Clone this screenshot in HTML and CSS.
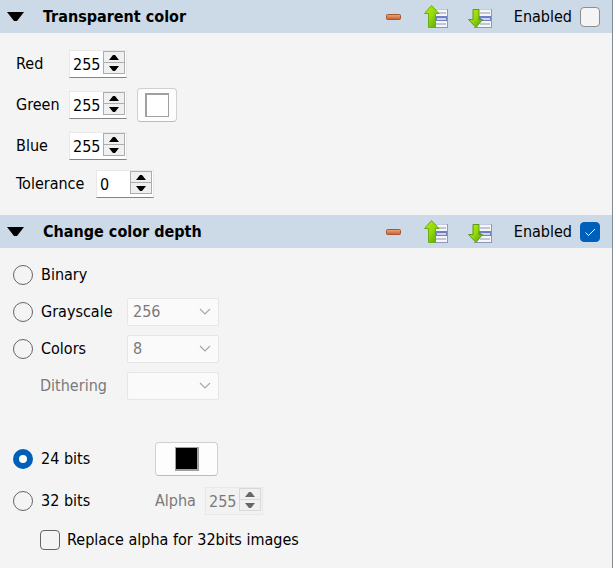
FILE: index.html
```html
<!DOCTYPE html>
<html lang="en">
<head>
<meta charset="utf-8">
<title>Image actions</title>
<link rel="stylesheet" href="styles.css">
</head>
<body>
<svg class="defs" aria-hidden="true">
  <defs>
    <linearGradient id="green" x1="0" y1="0" x2="1" y2="1">
      <stop offset="0" stop-color="#b8f000"/><stop offset="0.5" stop-color="#94d808"/><stop offset="1" stop-color="#4f9a12"/>
    </linearGradient>
    <linearGradient id="orange" x1="0" y1="0" x2="0" y2="1">
      <stop offset="0" stop-color="#f0a878"/><stop offset="1" stop-color="#c4602c"/>
    </linearGradient>
    <symbol id="list" viewBox="0 0 24 24">
      <rect x="6" y="4" width="18" height="19" fill="#f4f6fc"/>
      <path d="M6 4.500H24" stroke="#c4c8e0"/>
      <rect x="6" y="11" width="18" height="5" fill="#7080bc"/>
      <path d="M12 8H22M12 19H22" stroke="#c4c6ce" stroke-width="2"/>
      <path d="M13 14H22" stroke="#c8d4f4" stroke-width="2"/>
      <path d="M23.500 4V23M6 22.500H24" stroke="#9092c0" fill="none"/>
    </symbol>
    <symbol id="up" viewBox="0 0 24 24">
      <use href="#list" width="24" height="24"/>
      <path d="M7.500 .5L15 8.500H11.500V22.500H4.500V8.500H.5Z" fill="url(#green)" stroke="#69ad18"/>
    </symbol>
    <symbol id="down" viewBox="0 0 24 24">
      <use href="#list" width="24" height="24"/>
      <path d="M5 4.500H11V14.500H14.500L8 22.500L.5 14.500H5Z" fill="url(#green)" stroke="#5b9a1c"/>
    </symbol>
    <symbol id="minus" viewBox="0 0 16 6">
      <rect x=".5" y=".5" width="14" height="5" rx="1" fill="url(#orange)" stroke="#a5572f"/>
    </symbol>
    <symbol id="chevron" viewBox="0 0 12 8">
      <path d="M1 1L6 6L11 1" fill="none" stroke="currentColor" stroke-width="1.2"/>
    </symbol>
    <symbol id="tri-up" viewBox="0 0 10 5"><path d="M0 5L4 0H6L10 5Z" fill="currentColor"/></symbol>
    <symbol id="tri-down" viewBox="0 0 10 5"><path d="M0 0L4 5H6L10 0Z" fill="currentColor"/></symbol>
  </defs>
</svg>
<main class="panel">
  <section>
    <header class="bar">
      <button class="plain fold" aria-label="Collapse"><svg width="18" height="9" viewBox="0 0 18 9"><path d="M0 0H17L10 9H7Z"/></svg></button>
      <h2 class="title">Transparent color</h2>
      <div class="tools">
        <button class="plain" aria-label="Remove"><svg width="16" height="6"><use href="#minus"/></svg></button>
        <button class="plain" aria-label="Move up"><svg width="24" height="24"><use href="#up"/></svg></button>
        <button class="plain" aria-label="Move down"><svg width="24" height="24"><use href="#down"/></svg></button>
      </div>
      <label class="enabled">Enabled <input class="check light" type="checkbox"></label>
    </header>
    <div class="body channels">
      <div class="row">
        <label class="name" for="red">Red</label>
        <div class="spin"><input id="red" type="text" value="255"><div class="steps"><button aria-label="Increase red"><svg width="10" height="5"><use href="#tri-up"/></svg></button><button aria-label="Decrease red"><svg width="10" height="5"><use href="#tri-down"/></svg></button></div></div>
      </div>
      <div class="row">
        <label class="name" for="green-value">Green</label>
        <div class="spin"><input id="green-value" type="text" value="255"><div class="steps"><button aria-label="Increase green"><svg width="10" height="5"><use href="#tri-up"/></svg></button><button aria-label="Decrease green"><svg width="10" height="5"><use href="#tri-down"/></svg></button></div></div>
        <button class="picker" aria-label="Pick transparent color"><span class="swatch"></span></button>
      </div>
      <div class="row">
        <label class="name" for="blue">Blue</label>
        <div class="spin"><input id="blue" type="text" value="255"><div class="steps"><button aria-label="Increase blue"><svg width="10" height="5"><use href="#tri-up"/></svg></button><button aria-label="Decrease blue"><svg width="10" height="5"><use href="#tri-down"/></svg></button></div></div>
      </div>
      <div class="row">
        <label class="name wide" for="tolerance">Tolerance</label>
        <div class="spin"><input id="tolerance" type="text" value="0"><div class="steps"><button aria-label="Increase tolerance"><svg width="10" height="5"><use href="#tri-up"/></svg></button><button aria-label="Decrease tolerance"><svg width="10" height="5"><use href="#tri-down"/></svg></button></div></div>
      </div>
    </div>
  </section>
  <section>
    <header class="bar">
      <button class="plain fold" aria-label="Collapse"><svg width="18" height="9" viewBox="0 0 18 9"><path d="M0 0H17L10 9H7Z"/></svg></button>
      <h2 class="title">Change color depth</h2>
      <div class="tools">
        <button class="plain" aria-label="Remove"><svg width="16" height="6"><use href="#minus"/></svg></button>
        <button class="plain" aria-label="Move up"><svg width="24" height="24"><use href="#up"/></svg></button>
        <button class="plain" aria-label="Move down"><svg width="24" height="24"><use href="#down"/></svg></button>
      </div>
      <label class="enabled">Enabled <span class="box"><input class="check" type="checkbox" checked><svg class="tick" width="20" height="20" viewBox="0 0 20 20"><path d="M5.500 10.500L8.500 13.500L15 7" fill="none" stroke="#fff"/></svg></span></label>
    </header>
    <div class="body depth">
      <div class="group palette">
        <div class="row"><label class="option"><input type="radio" name="depth">Binary</label></div>
        <div class="row">
          <label class="option"><input type="radio" name="depth">Grayscale</label>
          <div class="combo"><select aria-label="Gray levels" disabled><option>256</option></select><svg width="12" height="8"><use href="#chevron"/></svg></div>
        </div>
        <div class="row">
          <label class="option"><input type="radio" name="depth">Colors</label>
          <div class="combo"><select aria-label="Color count" disabled><option>8</option></select><svg width="12" height="8"><use href="#chevron"/></svg></div>
        </div>
        <div class="row">
          <label class="option dim" for="dither">Dithering</label>
          <div class="combo"><select id="dither" disabled><option></option></select><svg width="12" height="8"><use href="#chevron"/></svg></div>
        </div>
      </div>
      <div class="group bits">
        <div class="row">
          <label class="option long"><input type="radio" name="depth" checked>24 bits</label>
          <button class="picker broad" aria-label="Pick background color"><span class="swatch black"></span></button>
        </div>
        <div class="row">
          <label class="option long"><input type="radio" name="depth">32 bits</label>
          <label class="alpha" for="alpha">Alpha</label>
          <div class="spin off"><input id="alpha" type="text" value="255" disabled><div class="steps"><button disabled aria-label="Increase alpha"><svg width="10" height="5"><use href="#tri-up"/></svg></button><button disabled aria-label="Decrease alpha"><svg width="10" height="5"><use href="#tri-down"/></svg></button></div></div>
        </div>
        <div class="row"><label class="replace"><input class="check" type="checkbox">Replace alpha for 32bits images</label></div>
      </div>
    </div>
  </section>
</main>
</body>
</html>
```
FILE: styles.css
```css
* { box-sizing: border-box; }
body {
  margin: 0;
  background: #f4f4f4;
  color: #000;
  font: 16px/20px "DejaVu Sans Condensed", "Noto Sans", sans-serif;
}
button, input, select { font: inherit; color: inherit; margin: 0; }
svg { display: block; }
.defs { position: absolute; width: 0; height: 0; }
.panel { min-height: 100vh; border-right: 1px solid #858b93; }

.bar {
  display: flex;
  align-items: center;
  height: 33px;
  padding: 0 12px 0 7px;
  background: #ccd9e6;
}
.plain { border: 0; padding: 0; background: none; }
.fold { width: 36px; }
.title { flex: 1; margin: 0; font-size: 16px; font-weight: 700; }
.tools { display: flex; align-items: center; gap: 20px; margin-right: 22px; }
.tools button:first-child { margin-right: 2px; }
.enabled { display: flex; align-items: center; gap: 8px; }

.check {
  appearance: none;
  display: block;
  width: 20px;
  height: 20px;
  border: 1px solid #666;
  border-radius: 4px;
  background: #f4f4f4;
}
.check.light { border-color: #8a8d91; }
.check:checked { border-color: #005fb8; background: #005fb8; }
.box { position: relative; }
.tick { position: absolute; inset: 0; pointer-events: none; }

.body, .group { display: flex; flex-direction: column; }
.channels { gap: 10px; padding: 17px 16px; }
.depth { gap: 42px; padding: 13px 13px 12px; }
.palette { gap: 9px; }
.bits { gap: 11px; }
.row { display: flex; align-items: center; min-height: 28px; }
.name { width: 53px; }
.name.wide { width: 80px; }

.spin {
  display: flex;
  width: 58px;
  height: 28px;
  padding: 0 1px 0 0;
  border: 1px solid #e8e8e8;
  border-bottom-color: #848484;
  background: #fff;
}
.spin input {
  flex: 1;
  min-width: 0;
  padding: 2px 0 0 3px;
  border: 0;
  background: none;
  outline: none;
}
.steps {
  display: flex;
  flex-direction: column;
  width: 22px;
  height: 23px;
  border: 1px solid #adadad;
}
.steps button {
  display: flex;
  flex: 1;
  align-items: center;
  justify-content: center;
  padding: 0;
  border: 0;
  background: #f0f0f0;
}
.steps button + button { border-top: 1px solid #adadad; }
.off { border-color: #e8e8e8; background: #f2f2f2; color: #7a7a7a; }
.off .steps, .off .steps button + button { border-color: #d5d9d9; }
.off .steps button { color: #666; }

.picker {
  display: flex;
  align-items: center;
  justify-content: center;
  width: 40px;
  height: 34px;
  margin-left: 10px;
  padding: 0;
  border: 1px solid #d0d0d0;
  border-bottom-color: #bcbcbc;
  border-radius: 4px;
  background: #fdfdfd;
}
.picker.broad { width: 63px; margin-left: 0; }
.swatch { width: 24px; height: 24px; border: 1px solid #a0a0a0; border-width: 2px 1px 1px 2px; background: #fff; }
.swatch.black { border-width: 1px 2px 2px 1px; background: #000; }

.option { display: flex; align-items: center; gap: 8px; width: 114px; }
.option.long { width: 142px; }
.option.dim { padding-left: 27px; color: #7a7a7a; }
.option input {
  appearance: none;
  width: 20px;
  height: 20px;
  border: 1px solid #666;
  border-radius: 50%;
  background: #f4f4f4;
}
.option input:checked { border: 6px solid #005fb8; background: #fff; }

.combo { position: relative; width: 92px; color: #7a7a7a; }
.combo select {
  appearance: none;
  display: block;
  width: 100%;
  height: 28px;
  padding: 0 5px;
  border: 1px solid #e6e6e6;
  border-radius: 2px;
  background: #fafafa;
  opacity: 1;
}
.combo svg { position: absolute; top: 10px; right: 8px; color: #a8a8a8; pointer-events: none; }

.alpha { width: 50px; color: #7a7a7a; }
.replace { display: flex; align-items: center; gap: 7px; padding-left: 27px; }
```
